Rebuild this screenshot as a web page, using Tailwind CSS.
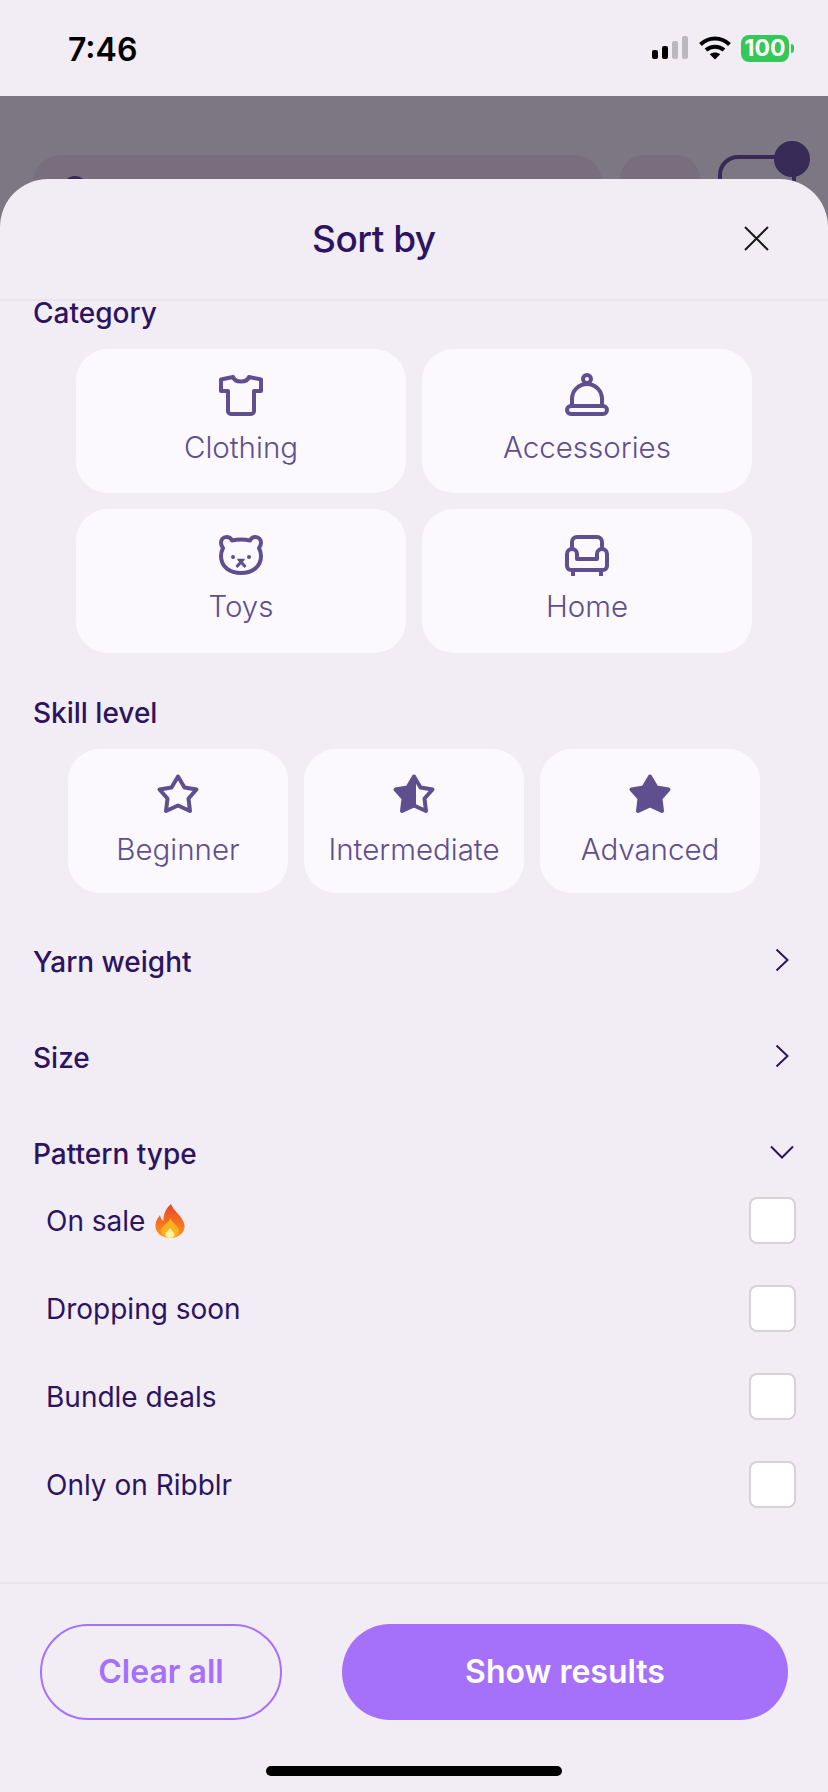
<!DOCTYPE html>
<html lang="en">
  <head>
    <meta charset="UTF-8" />
    <meta name="viewport" content="width=device-width, initial-scale=1.0" />
    <script src="https://cdn.jsdelivr.net/npm/@tailwindcss/browser@4"></script>
    <title>Sort by</title>
  </head>
  <body class="bg-[#f2edf4] font-['Inter',sans-serif]">
    <div class="relative flex h-[1792px] w-[828px] flex-col overflow-hidden">
      <!-- Status bar -->
      <div class="flex h-[96px] items-center justify-between pl-[68px] pr-[34px]">
        <span class="pt-[4px] text-[32px] font-semibold leading-none text-black">7:46</span>
        <div class="flex items-center gap-[9px]">
          <svg width="38" height="24" viewBox="0 0 38 24">
            <rect x="1" y="14" width="6" height="9" rx="2" fill="#000" />
            <rect x="11" y="10" width="6" height="13" rx="2" fill="#000" />
            <rect x="21" y="5" width="6" height="18" rx="2" fill="#bcb8c0" />
            <rect x="31" y="0" width="6" height="23" rx="2" fill="#bcb8c0" />
          </svg>
          <svg width="34" height="24" viewBox="0 0 34 24" fill="none">
            <path d="M2.5 8.5C11 0.5 23 0.5 31.5 8.5" stroke="#000" stroke-width="4" />
            <path d="M8 14C13 9.5 21 9.5 26 14" stroke="#000" stroke-width="4" />
            <path d="M17 23.5L11.8 18.3C14.7 15.8 19.3 15.8 22.2 18.3Z" fill="#000" />
          </svg>
          <div class="flex items-center gap-[2px]">
            <div class="flex h-[27px] w-[48px] items-center justify-center rounded-[8px] bg-[#34c759] text-[23px] font-bold leading-none text-white">100</div>
            <div class="h-[9px] w-[3px] rounded-r-full bg-[#34c759]"></div>
          </div>
        </div>
      </div>

      <!-- Dimmed page behind the sheet -->
      <div class="flex flex-1 flex-col bg-[#7d7683]">
        <div class="relative flex h-[83px] gap-[18px] pl-[33px] pt-[59px]">
          <div class="h-[70px] w-[569px] rounded-[28px] bg-[#786e7d] pl-[29px] pt-[21px]">
            <div class="h-[26px] w-[26px] rounded-full border-[3px] border-[#372a57]"></div>
          </div>
          <div class="h-[70px] w-[80px] rounded-[24px] bg-[#786e7d]"></div>
          <div class="h-[70px] w-[78px] rounded-[20px] border-[4px] border-[#372a57]"></div>
          <div class="absolute left-[774px] top-[45px] h-[36px] w-[36px] rounded-full bg-[#372a57]"></div>
        </div>

        <!-- Sheet -->
        <div class="relative z-10 flex flex-1 flex-col rounded-t-[48px] bg-[#f2edf4]">
          <div class="flex h-[122px] shrink-0 items-center justify-between border-b-2 border-[#ebe3ec] pl-[312px] pr-[59px] pb-[2px]">
            <h1 class="text-[37px] font-medium leading-none tracking-[-0.5px] text-[#2d1460]">Sort by</h1>
            <svg width="25" height="25" viewBox="0 0 25 25" fill="none" stroke="#1a1a1a" stroke-width="2">
              <path d="M1 1L24 24M24 1L1 24" />
            </svg>
          </div>

          <div class="flex-1 pt-[1px]">
            <h2 class="pl-[33px] text-[28px] font-medium leading-[22px] text-[#2d1460]">Category</h2>
            <div class="mt-[25px] grid grid-cols-2 gap-4 px-[76px]">
              <div class="flex h-[144px] flex-col items-center rounded-[32px] bg-[#fbf9fd] pt-[23px] text-[#5f4f8f]">
                <svg width="48" height="48" viewBox="0 0 48 48" fill="none" stroke="currentColor" stroke-width="4" stroke-linejoin="round">
                  <path d="M16 5C18 11 30 11 32 5L44 7.5V19H37V39A3 3 0 0 1 34 42H14A3 3 0 0 1 11 39V19H4V7.5Z" />
                </svg>
                <span class="mt-[9px] text-[29.500px] font-light leading-[36px]">Clothing</span>
              </div>
              <div class="flex h-[144px] flex-col items-center rounded-[32px] bg-[#fbf9fd] pt-[23px] text-[#5f4f8f]">
                <svg width="48" height="48" viewBox="0 0 48 48" fill="none" stroke="currentColor" stroke-width="4" stroke-linejoin="round">
                  <circle cx="24" cy="7" r="4" />
                  <path d="M9 34V27A15 15 0 0 1 39 27V34" />
                  <rect x="4" y="34" width="40" height="8" rx="4" />
                </svg>
                <span class="mt-[9px] text-[29.500px] font-light leading-[36px]">Accessories</span>
              </div>
              <div class="flex h-[144px] flex-col items-center rounded-[32px] bg-[#fbf9fd] pt-[22px] text-[#5f4f8f]">
                <svg width="48" height="48" viewBox="0 0 48 48" fill="none" stroke="currentColor" stroke-width="4" stroke-linejoin="round">
                  <path d="M15 9.5C20 8.5 28 8.5 33 9.5C34 7 36.5 6 38.5 6C42 6 44 9 44 12C44 14 43 15.5 42 17C43.5 20 44 22.5 44 25C44 36 35 42 24 42C13 42 4 36 4 25C4 22.5 4.500 20 6 17C5 15.500 4 14 4 12C4 9 6 6 9.500 6C11.500 6 14 7 15 9.500Z" />
                  <circle cx="16" cy="26" r="2" fill="currentColor" stroke="none" />
                  <circle cx="32" cy="26" r="2" fill="currentColor" stroke="none" />
                  <path d="M21 28.500H27L24 32Z" fill="currentColor" stroke-width="1.500" />
                  <path d="M24 31L19.500 36M24 31L28.500 36" stroke-width="3" />
                </svg>
                <span class="mt-[9px] text-[29.500px] font-light leading-[36px]">Toys</span>
              </div>
              <div class="flex h-[144px] flex-col items-center rounded-[32px] bg-[#fbf9fd] pt-[22px] text-[#5f4f8f]">
                <svg width="48" height="48" viewBox="0 0 48 48" fill="none" stroke="currentColor" stroke-width="4" stroke-linejoin="round">
                  <path d="M9 18V11A5 5 0 0 1 14 6H34A5 5 0 0 1 39 11V18" />
                  <path d="M4 23A5 5 0 0 1 14 23V28H34V23A5 5 0 0 1 44 23V35A4 4 0 0 1 40 39H8A4 4 0 0 1 4 35Z" />
                  <path d="M10 40V45M38 40V45" />
                </svg>
                <span class="mt-[9px] text-[29.500px] font-light leading-[36px]">Home</span>
              </div>
            </div>

            <h2 class="mt-[46px] pl-[33px] text-[28px] font-medium leading-[28px] text-[#2d1460]">Skill level</h2>
            <div class="mt-[22px] grid grid-cols-3 gap-4 px-[68px]">
              <div class="flex h-[144px] flex-col items-center rounded-[32px] bg-[#fbf9fd] pt-[21px] text-[#5f4f8f]">
                <svg width="48" height="48" viewBox="0 0 48 48" fill="none" stroke="currentColor" stroke-width="4" stroke-linejoin="round">
                  <path d="M24 6.500L30.500 17.500L42.500 19.500L34.500 28.500L36 41L24 35.500L12 41L13.500 28.500L5.500 19.500L17.500 17.500Z" />
                </svg>
                <span class="mt-[13px] text-[29.500px] font-light leading-[36px]">Beginner</span>
              </div>
              <div class="flex h-[144px] flex-col items-center rounded-[32px] bg-[#fbf9fd] pt-[21px] text-[#5f4f8f]">
                <svg width="48" height="48" viewBox="0 0 48 48" fill="none" stroke="currentColor" stroke-width="4" stroke-linejoin="round">
                  <path d="M24 6.500V35.500L12 41L13.500 28.500L5.500 19.500L17.500 17.500Z" fill="currentColor" />
                  <path d="M24 6.500L30.500 17.500L42.500 19.500L34.500 28.500L36 41L24 35.500" />
                </svg>
                <span class="mt-[13px] text-[29.500px] font-light leading-[36px]">Intermediate</span>
              </div>
              <div class="flex h-[144px] flex-col items-center rounded-[32px] bg-[#fbf9fd] pt-[21px] text-[#5f4f8f]">
                <svg width="48" height="48" viewBox="0 0 48 48" fill="currentColor" stroke="currentColor" stroke-width="4" stroke-linejoin="round">
                  <path d="M24 6.500L30.500 17.500L42.500 19.500L34.500 28.500L36 41L24 35.500L12 41L13.500 28.500L5.500 19.500L17.500 17.500Z" />
                </svg>
                <span class="mt-[13px] text-[29.500px] font-light leading-[36px]">Advanced</span>
              </div>
            </div>

            <div class="mt-[39px] flex h-[56px] items-center justify-between pl-[33px] pr-[39px]">
              <span class="pt-[3px] text-[28px] font-medium text-[#2d1460]">Yarn weight</span>
              <svg width="14" height="24" viewBox="0 0 14 24" fill="none" stroke="#2d1460" stroke-width="2"><path d="M1.500 1.500L12.500 12L1.500 22.500" /></svg>
            </div>
            <div class="mt-[40px] flex h-[56px] items-center justify-between pl-[33px] pr-[39px]">
              <span class="pt-[3px] text-[28px] font-medium text-[#2d1460]">Size</span>
              <svg width="14" height="24" viewBox="0 0 14 24" fill="none" stroke="#2d1460" stroke-width="2"><path d="M1.500 1.500L12.500 12L1.500 22.500" /></svg>
            </div>
            <div class="mt-[40px] flex h-[56px] items-center justify-between pl-[33px] pr-[34px]">
              <span class="pt-[3px] text-[28px] font-medium text-[#2d1460]">Pattern type</span>
              <svg width="24" height="14" viewBox="0 0 24 14" fill="none" stroke="#2d1460" stroke-width="2"><path d="M1 1.500L12 12.500L23 1.500" /></svg>
            </div>

            <div class="mt-[17px] flex flex-col gap-[41px] pl-[46px] pr-[32px]">
              <div class="flex h-[47px] items-center justify-between">
                <span class="flex items-center gap-[10px] text-[28px] text-[#2d1460]">
                  On sale
                  <svg width="30" height="34" viewBox="0 0 30 34">
                    <defs>
                      <linearGradient id="flame" x1="0" y1="0" x2="0" y2="1">
                        <stop offset="0" stop-color="#e8452c" />
                        <stop offset="0.55" stop-color="#f5701f" />
                        <stop offset="1" stop-color="#fb9a1d" />
                      </linearGradient>
                    </defs>
                    <path d="M16 0C18 7 28 12 29.500 21C30.500 29 23 34 15 34C7 34 0.500 29 0.500 22C0.500 17 3 14 5 11C5.500 14 6.500 16 8.500 17C8 11 11 4 16 0Z" fill="url(#flame)" />
                    <path d="M15.500 14C17 19 24 22 24 27C24 31 20 34 15 34C10 34 6 31 6 27C6 22 13 20 15.500 14Z" fill="#fdb022" />
                    <path d="M15 24C16.500 27 19.500 28.500 19.500 30.500C19.500 33 17.500 34 15 34C12.500 34 10.500 33 10.500 30.500C10.500 28.500 13.500 27 15 24Z" fill="#fff3a0" />
                  </svg>
                </span>
                <div class="h-[47px] w-[47px] rounded-[8px] border-2 border-[#d5d2d8] bg-white"></div>
              </div>
              <div class="flex h-[47px] items-center justify-between">
                <span class="text-[28px] text-[#2d1460]">Dropping soon</span>
                <div class="h-[47px] w-[47px] rounded-[8px] border-2 border-[#d5d2d8] bg-white"></div>
              </div>
              <div class="flex h-[47px] items-center justify-between">
                <span class="text-[28px] text-[#2d1460]">Bundle deals</span>
                <div class="h-[47px] w-[47px] rounded-[8px] border-2 border-[#d5d2d8] bg-white"></div>
              </div>
              <div class="flex h-[47px] items-center justify-between">
                <span class="text-[28px] text-[#2d1460]">Only on Ribblr</span>
                <div class="h-[47px] w-[47px] rounded-[8px] border-2 border-[#d5d2d8] bg-white"></div>
              </div>
            </div>
          </div>

          <!-- Footer -->
          <div class="shrink-0 border-t-2 border-[#ebe3ec] pt-[40px]">
            <div class="flex justify-between px-[40px]">
              <button class="h-[96px] w-[242px] rounded-full border-2 border-[#a571fb] text-[32px] font-semibold text-[#a571fb]">Clear all</button>
              <button class="h-[96px] w-[446px] rounded-full bg-[#a571fb] text-[32px] font-semibold text-white">Show results</button>
            </div>
            <div class="mx-auto mb-[16px] mt-[46px] h-[10px] w-[296px] rounded-full bg-black"></div>
          </div>
        </div>
      </div>
    </div>
  </body>
</html>
